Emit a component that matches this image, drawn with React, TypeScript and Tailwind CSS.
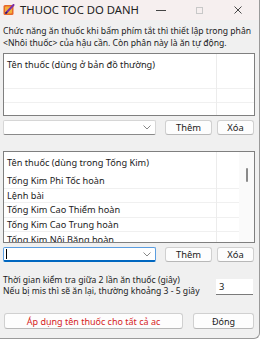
import React from "react";

const font = { fontFamily: '"Noto Sans", "Liberation Sans", sans-serif' };

function Chevron() {
  return (
    <svg width="8" height="5" viewBox="0 0 8 5" className="block">
      <path d="M0.5 0.5 L4 4 L7.5 0.5" fill="none" stroke="#7a7a7a" strokeWidth="0.9" />
    </svg>
  );
}

function Combo({ focused }: { focused?: boolean }) {
  return (
    <div
      className={
        "w-[155px] h-[15px] bg-white flex items-center justify-end pr-[4px] rounded-[2px] border " +
        (focused ? "border-[#5a9de0] border-b-[2px] border-b-[#0067c0]" : "border-[#d6d6d6] border-b-[#8a8a8a]")
      }
    >
      {focused && <div className="mr-auto ml-[2px] w-px h-[10px] bg-black" />}
      <Chevron />
    </div>
  );
}

function Btn({ w, children, red }: { w: string; children: React.ReactNode; red?: boolean }) {
  return (
    <div
      className={
        w +
        " bg-[#fdfdfd] border border-[#d0d0d0] border-b-[#b8b8b8] rounded-[3px] flex items-center justify-center leading-none shrink-0 whitespace-nowrap " +
        (red ? "text-[#d61c1c]" : "text-[#1a1a1a]")
      }
    >
      {children}
    </div>
  );
}

function ButtonRow({ focused }: { focused?: boolean }) {
  return (
    <div className="flex items-center h-[15px] text-[9.4px]">
      <Combo focused={focused} />
      <div className="ml-[9px]">
        <Btn w="w-[47px] h-[15px]">Thêm</Btn>
      </div>
      <div className="ml-[5px]">
        <Btn w="w-[37px] h-[15px]">Xóa</Btn>
      </div>
    </div>
  );
}

function Row({ children, line = true }: { children?: React.ReactNode; line?: boolean }) {
  return (
    <div className={"h-[14.5px] shrink-0 flex items-center pl-[3px] whitespace-nowrap " + (line ? "border-b border-[#f0f0f0]" : "")}>
      <span className="leading-none">{children}</span>
    </div>
  );
}

export default function App() {
  return (
    <div className="w-[262px] h-[342px] bg-white flex overflow-hidden text-[#1b1b1b]" style={font}>
      <div className="w-[260px] h-[339px] shrink-0 bg-[#f0f0f0] border-r border-b border-[#9a9a9a] rounded-br-[6px] flex flex-col overflow-hidden">
        {/* Title bar */}
        <div className="h-[20px] bg-[#f6efef] flex items-center shrink-0">
          <svg width="12" height="12" viewBox="0 0 12 12" className="ml-[3px] shrink-0">
            <rect x="0.5" y="1" width="10" height="10" rx="1.5" fill="#e8662c" />
            <rect x="2" y="2.5" width="7" height="7" rx="1" fill="#f5b03a" />
            <path d="M3 9 L10.5 1" stroke="#7b2fa8" strokeWidth="2" strokeLinecap="round" />
            <path d="M2.5 9.5 L4 8" stroke="#3a1a50" strokeWidth="1.6" />
          </svg>
          <span className="ml-[5px] text-[11.3px] leading-none whitespace-nowrap text-[#222]">THUOC TOC DO DANH</span>
          <div className="ml-auto flex items-center">
            <div className="w-[10px] h-px bg-[#444] mr-[30px]" />
            <div className="w-[7px] h-[7px] border border-[#c8c8c8] mr-[31px]" />
            <svg width="8" height="8" viewBox="0 0 8 8" className="mr-[17px]">
              <path d="M0.5 0.5 L7.5 7.5 M7.5 0.5 L0.5 7.5" stroke="#333" strokeWidth="0.9" />
            </svg>
          </div>
        </div>

        <div className="pl-[3px] pr-[5px] flex flex-col">
          <div className="mt-[5px] h-[24px] text-[8.6px] leading-[12px] whitespace-nowrap">
            Chức năng ăn thuốc khi bấm phím tắt thì thiết lập trong phân
            <br />
            &lt;Nhôi thuốc&gt; của hậu cần. Còn phân này là ăn tự động.
          </div>

          {/* List 1 */}
          <div className="mt-[4px] h-[63px] w-[252px] border border-[#7f7f7f] bg-white flex text-[9.2px] shrink-0">
            <div className="w-[213px] border-r border-[#ececec] flex flex-col">
              <div className="h-[21px] flex items-center pl-[3px] pt-[1px] whitespace-nowrap">
                <span className="leading-none">Tên thuốc (dùng ở bản đồ thường)</span>
              </div>
              <div className="h-[14px] border-b border-[#f0f0f0]" />
              <div className="h-[14px] border-b border-[#f0f0f0]" />
            </div>
            <div className="flex-1 flex flex-col">
              <div className="h-[21px]" />
              <div className="h-[14px] border-b border-[#f0f0f0]" />
              <div className="h-[14px] border-b border-[#f0f0f0]" />
            </div>
          </div>

          <div className="mt-[4px]">
            <ButtonRow />
          </div>

          {/* List 2 */}
          <div className="mt-[16px] h-[92px] w-[252px] border border-[#7f7f7f] bg-white flex text-[9.2px] overflow-hidden shrink-0">
            <div className="w-[213px] border-r border-[#ececec] flex flex-col shrink-0">
              <div className="h-[22px] shrink-0 flex items-center pl-[3px] whitespace-nowrap">
                <span className="leading-none">Tên thuốc (dùng trong Tống Kim)</span>
              </div>
              <Row>Tống Kim Phi Tốc hoàn</Row>
              <Row>Lệnh bài</Row>
              <Row>Tống Kim Cao Thiểm hoàn</Row>
              <Row>Tống Kim Cao Trung hoàn</Row>
              <Row line={false}>Tống Kim Nội Băng hoàn</Row>
            </div>
            <div className="w-[22px] flex flex-col shrink-0">
              <div className="h-[22px] shrink-0" />
              <div className="h-[14.5px] shrink-0 border-b border-[#f0f0f0]" />
              <div className="h-[14.5px] shrink-0 border-b border-[#f0f0f0]" />
              <div className="h-[14.5px] shrink-0 border-b border-[#f0f0f0]" />
              <div className="h-[14.5px] shrink-0 border-b border-[#f0f0f0]" />
            </div>
            <div className="flex-1 bg-[#fafafa] flex justify-center pt-[16px]">
              <div className="w-[2px] h-[14px] bg-[#8a8a8a] rounded-full" />
            </div>
          </div>

          <div className="mt-[4px]">
            <ButtonRow focused />
          </div>

          {/* Time setting */}
          <div className="mt-[13px] h-[22px] flex items-start">
            <div className="text-[8.6px] leading-[11px] whitespace-nowrap">
              Thời gian kiểm tra giữa 2 lần ăn thuốc (giây)
              <br />
              Nếu bị mis thì sẽ ăn lại, thường khoảng 3 - 5 giây
            </div>
            <div className="ml-auto mr-[1px] mt-[4px] w-[37px] h-[16px] bg-white border-b border-[#7a7a7a] flex items-center pl-[3px] text-[9.4px] leading-none">
              3
            </div>
          </div>

          {/* Bottom buttons */}
          <div className="mt-[16px] flex items-center text-[9px]">
            <div className="ml-[1px]">
              <Btn w="w-[179px] h-[16px]" red>
                Áp dụng tên thuốc cho tất cả ac
              </Btn>
            </div>
            <div className="ml-[10px]">
              <Btn w="w-[61px] h-[16px]">Đóng</Btn>
            </div>
          </div>
        </div>
      </div>
    </div>
  );
}
